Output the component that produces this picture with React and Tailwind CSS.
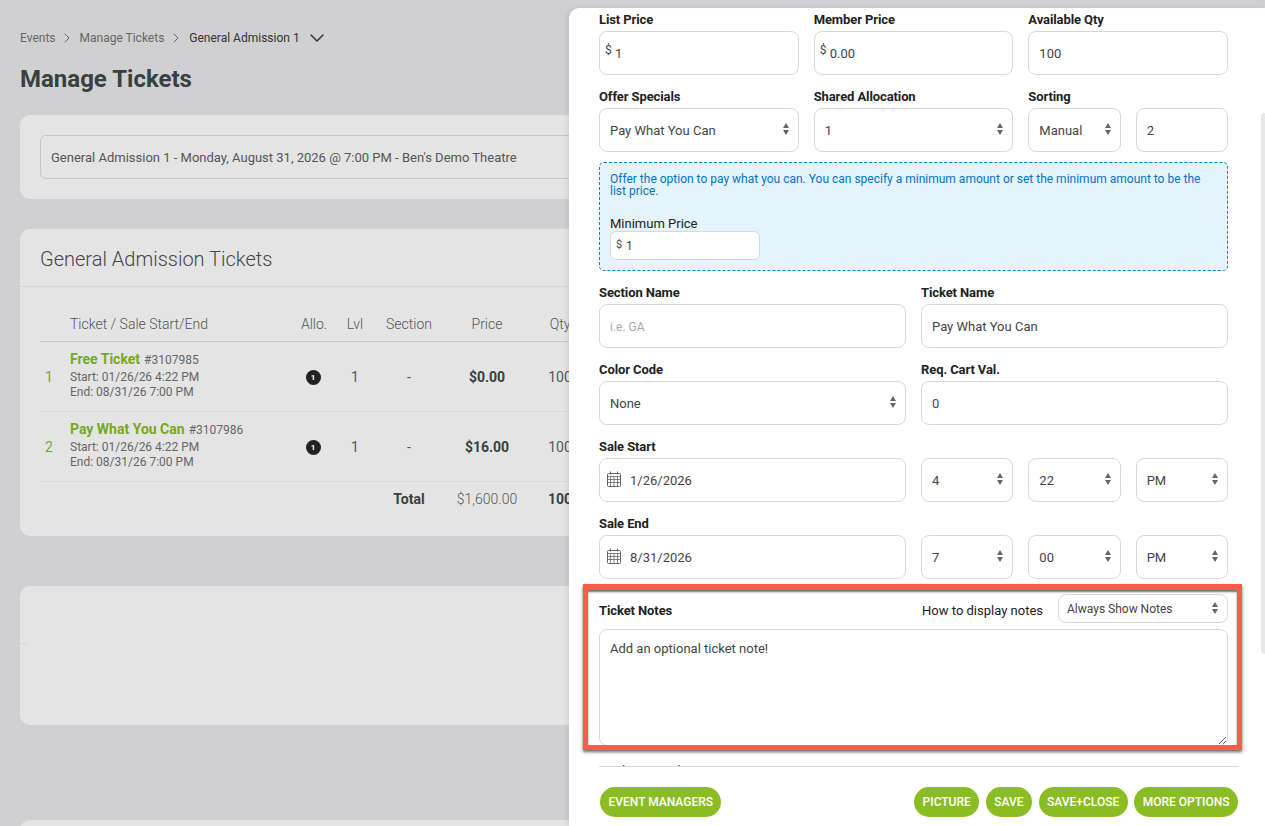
import React from "react";
import { ChevronRight, ChevronDown } from "lucide-react";

const labelCls = "block h-[17px] pt-px leading-4 mb-[3px] text-[13px] font-bold text-[#222] tracking-[-0.1px]";
const boxCls = "w-full h-11 bg-white border border-[#d9d9d9] rounded-lg text-[13px] text-[#444] outline-none";

function Arrows() {
  return (
    <svg className="absolute right-[10px] top-1/2 -translate-y-[9px] pointer-events-none" width="6" height="16" viewBox="0 0 6 16">
      <path d="M3 2 L6 7 L0 7 Z M0 9 L6 9 L3 14 Z" fill="#666" />
    </svg>
  );
}

function Select({ value, className = "" }) {
  return (
    <div className={"relative " + className}>
      <select defaultValue={value} className={boxCls + " appearance-none pl-[10px] pt-[2px]"}>
        <option>{value}</option>
      </select>
      <Arrows />
    </div>
  );
}

function Money({ value }) {
  return (
    <div className="relative">
      <span className="absolute left-[6px] top-[11px] text-[12px] leading-4 text-[#444]">$</span>
      <input readOnly value={value} className={boxCls + " pl-[15px]"} />
    </div>
  );
}

function Calendar() {
  return (
    <svg className="absolute left-2 top-[13px]" width="14" height="16" viewBox="0 0 14 16" fill="none" stroke="#666" strokeWidth="1">
      <rect x="0.5" y="2.5" width="13" height="13" rx="1" />
      <path d="M0.5 5.5H13.5M0.5 8.5H13.5M0.5 11.5H13.5M3.5 5.5V15.5M7 5.5V15.5M10.5 5.5V15.5" strokeWidth="0.8" />
      <path d="M3.5 0.5V3.5M10.5 0.5V3.5" />
    </svg>
  );
}

function DateField({ value }) {
  return (
    <div className="relative col-span-3">
      <Calendar />
      <input readOnly value={value} className={boxCls + " pl-[30px]"} />
    </div>
  );
}

function Badge() {
  return (
    <span className="mx-auto -translate-x-px flex w-[15px] h-[15px] items-center justify-center rounded-full bg-[#222] text-white text-[8px] font-bold">1</span>
  );
}

const rowGrid = "grid grid-cols-[30px_224px_40px_42px_66px_90px_56px] items-center";

function TicketRow({ n, name, id, start, end, price }) {
  return (
    <div className={rowGrid + " h-[70px] border-b border-[#d8d8d8] pt-[2px] text-[14px] text-[#555]"}>
      <span className="pl-[5px] text-[#75aa1e]">{n}</span>
      <div className="pb-[6px]">
        <div className="mb-[2px] h-[18px] leading-[18px] whitespace-nowrap">
          <span className="font-bold text-[#75aa1e]">{name}</span>
          <span className="ml-1 text-[12px] text-[#666]">{id}</span>
        </div>
        <div className="text-[12px] leading-[15px] text-[#666]">{start}</div>
        <div className="text-[12px] leading-[15px] text-[#666]">{end}</div>
      </div>
      <Badge />
      <span className="text-center">1</span>
      <span className="text-center">-</span>
      <span className="text-center font-bold text-[#374140]">{price}</span>
      <span className="text-center">100</span>
    </div>
  );
}

function Btn({ children }) {
  return (
    <button className="h-[30px] rounded-full bg-[#8abd24] px-[8.5px] text-[12px] font-medium text-white whitespace-nowrap">
      {children}
    </button>
  );
}

export default function App() {
  return (
    <div className="relative h-[826px] w-full overflow-hidden bg-[#d0d0d2] font-['Roboto',sans-serif]">
      {/* page behind the drawer */}
      <main className="px-5 pt-[30px]">
        <nav className="flex h-4 items-center text-[12px] text-[#666]">
          <span>Events</span>
          <ChevronRight size={16} strokeWidth={1.5} className="ml-[3px] mr-[5px]" />
          <span>Manage Tickets</span>
          <ChevronRight size={16} strokeWidth={1.5} className="ml-[4px] mr-[5px]" />
          <span className="text-[#333]">General Admission 1</span>
          <ChevronDown size={24} strokeWidth={1.5} className="ml-[5px] shrink-0 text-[#333]" />
        </nav>
        <h1 className="mt-[18px] text-[24px] leading-[30px] font-bold text-[#374140]">Manage Tickets</h1>

        <section className="mt-[21px] rounded-[10px] bg-[#e4e4e4] p-5">
          <div className="flex h-11 items-center rounded-md border border-[#c6c6c6] pl-[10px] pt-[2px] text-[13px] text-[#555]">
            General Admission 1 - Monday, August 31, 2026 @ 7:00 PM - Ben's Demo Theatre
          </div>
        </section>

        <section className="mt-[30px] h-[307px] rounded-[10px] bg-[#e4e4e4]">
          <h2 className="flex h-[58px] items-center border-b border-[#d6d6d6] pl-5 pt-[2px] text-[20px] font-light text-[#444]">General Admission Tickets</h2>
          <div className="pl-5">
            <div className={rowGrid + " h-[55px] border-b border-[#c8c8c8] pt-[20px] text-[14px] font-light text-[#555]"}>
              <span />
              <span>Ticket / Sale Start/End</span>
              <span className="text-center">Allo.</span>
              <span className="text-center">Lvl</span>
              <span className="text-center">Section</span>
              <span className="text-center">Price</span>
              <span className="text-center">Qty</span>
            </div>
            <TicketRow n="1" name="Free Ticket" id="#3107985" start="Start: 01/26/26 4:22 PM" end="End: 08/31/26 7:00 PM" price="$0.00" />
            <TicketRow n="2" name="Pay What You Can" id="#3107986" start="Start: 01/26/26 4:22 PM" end="End: 08/31/26 7:00 PM" price="$16.00" />
            <div className={rowGrid + " h-[35px] text-[14px]"}>
              <span />
              <span />
              <span />
              <span />
              <span className="text-center font-bold text-[#374140]">Total</span>
              <span className="text-center font-light text-[#555]">$1,600.00</span>
              <span className="text-center font-bold text-[#374140]">100</span>
            </div>
          </div>
        </section>

        <section className="mt-[50px] h-[139px] rounded-[10px] bg-[#e4e4e4] pt-[57px]">
          <div className="h-px w-[7px] bg-[#d6d6d6]" />
        </section>
        <section className="mt-[95px] h-[139px] rounded-[10px] bg-[#e4e4e4]" />
      </main>

      {/* drawer */}
      <aside className="absolute left-[569px] right-0 top-2 bottom-0 flex flex-col rounded-tl-[10px] bg-white shadow-[-2px_0_5px_rgba(0,0,0,0.08)]">
        <div className="min-h-0 flex-1 overflow-hidden pl-[30px] pr-[37px] pt-[3px]">
          <div className="mb-[13px] grid grid-cols-6 gap-x-[15px]">
            <div className="col-span-2"><label className={labelCls}>List Price</label><Money value="1" /></div>
            <div className="col-span-2"><label className={labelCls}>Member Price</label><Money value="0.00" /></div>
            <div className="col-span-2"><label className={labelCls}>Available Qty</label><input readOnly value="100" className={boxCls + " pl-[10px]"} /></div>
          </div>
          <div className="mb-[10px] grid grid-cols-6 gap-x-[15px]">
            <div className="col-span-2"><label className={labelCls}>Offer Specials</label><Select value="Pay What You Can" /></div>
            <div className="col-span-2"><label className={labelCls}>Shared Allocation</label><Select value="1" /></div>
            <div><label className={labelCls}>Sorting</label><Select value="Manual" /></div>
            <div className="pt-5"><input readOnly value="2" className={boxCls + " pl-[10px]"} /></div>
          </div>

          <div className="mb-[13px] h-[109px] rounded-[5px] border border-dashed border-[#0a84c6] bg-[#e5f3fc] px-[10px] pt-[10px]">
            <p className="text-[12px] leading-3 text-[#0077c0]">
              Offer the option to pay what you can. You can specify a minimum amount or set the minimum amount to be the list price.
            </p>
            <label className="mt-[19px] block h-[15px] text-[13px] leading-4 text-[#222]">Minimum Price</label>
            <div className="relative w-[150px]">
              <span className="absolute left-[6px] top-[6px] text-[11px] leading-4 text-[#444]">$</span>
              <input readOnly value="1" className="h-[29px] w-full rounded-md border border-[#d9d9d9] bg-white pl-[15px] text-[12px] text-[#444] outline-none" />
            </div>
          </div>

          <div className="mb-[13px] grid grid-cols-6 gap-x-[15px]">
            <div className="col-span-3"><label className={labelCls}>Section Name</label><input readOnly placeholder="i.e. GA" className={boxCls + " pl-[10px] placeholder:text-[#aaa] placeholder:text-[12px]"} /></div>
            <div className="col-span-3"><label className={labelCls}>Ticket Name</label><input readOnly value="Pay What You Can" className={boxCls + " pl-[10px]"} /></div>
          </div>
          <div className="mb-[13px] grid grid-cols-6 gap-x-[15px]">
            <div className="col-span-3"><label className={labelCls}>Color Code</label><Select value="None" /></div>
            <div className="col-span-3"><label className={labelCls}>Req. Cart Val.</label><input readOnly value="0" className={boxCls + " pl-[10px]"} /></div>
          </div>
          <label className={labelCls}>Sale Start</label>
          <div className="mb-[13px] grid grid-cols-6 gap-x-[15px]">
            <DateField value="1/26/2026" />
            <Select value="4" />
            <Select value="22" />
            <Select value="PM" />
          </div>
          <label className={labelCls}>Sale End</label>
          <div className="mb-[15px] grid grid-cols-6 gap-x-[15px]">
            <DateField value="8/31/2026" />
            <Select value="7" />
            <Select value="00" />
            <Select value="PM" />
          </div>

          <div className="mb-[6px] flex h-[29px] items-center">
            <span className="mt-[5px] text-[13px] font-bold text-[#222] tracking-[-0.1px]">Ticket Notes</span>
            <span className="ml-auto mt-[5px] text-[13px] text-[#222]">How to display notes</span>
            <div className="relative ml-[15px] w-[170px]">
              <select defaultValue="Always Show Notes" className="h-[29px] w-full appearance-none rounded-lg border border-[#d9d9d9] bg-white pl-2 text-[12px] text-[#444] outline-none">
                <option>Always Show Notes</option>
              </select>
              <svg className="absolute right-[10px] top-[6px] pointer-events-none" width="6" height="16" viewBox="0 0 6 16">
                <path d="M3 2 L6 7 L0 7 Z M0 9 L6 9 L3 14 Z" fill="#666" />
              </svg>
            </div>
          </div>
          <textarea readOnly defaultValue="Add an optional ticket note!" className="block h-[117px] w-full rounded-lg border border-[#d9d9d9] px-[10px] pt-[11px] text-[13px] leading-4 text-[#444] outline-none" />
          <div className="mt-[16px] pl-[7px] text-[12px] text-[#222]">Ticket Special Instructions</div>
        </div>

        <footer className="ml-[30px] mr-[26px] flex h-[60px] shrink-0 items-start justify-between border-t border-[#d8d8d8] px-px pt-5">
          <Btn>EVENT MANAGERS</Btn>
          <div className="flex gap-[6.5px]">
            <Btn>PICTURE</Btn>
            <Btn>SAVE</Btn>
            <Btn>SAVE+CLOSE</Btn>
            <Btn>MORE OPTIONS</Btn>
          </div>
        </footer>

        {/* scrollbar thumb */}
        <div className="absolute right-0 top-[105px] h-[541px] w-1 rounded-l-sm bg-[#e8e8e8]" />
      </aside>

      {/* annotation frame */}
      <div className="pointer-events-none absolute left-[583px] top-[584px] h-[166px] w-[659px] border-[5px] border-t-[6px] border-[#fe5a4e] shadow-[0_2px_3px_rgba(0,0,0,0.6),inset_0_2px_2px_rgba(0,0,0,0.55)]" />
    </div>
  );
}
